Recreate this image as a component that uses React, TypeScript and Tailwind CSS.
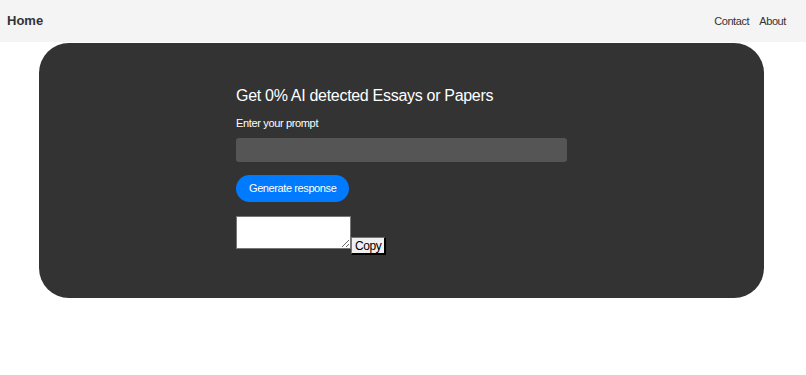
export default function App() {
  return (
    <div className="min-h-screen bg-white font-['Liberation_Sans',Arial,sans-serif] text-[#333]">
      {/* nav */}
      <nav className="h-[42px] bg-[#f4f4f4] flex items-center justify-between pl-[7px] pr-[20px]">
        <span className="text-[13px] font-bold text-[#333]">Home</span>
        <div className="flex items-center gap-[10px] text-[11px] tracking-[-0.4px] text-[#333]">
          <a>Contact</a>
          <a>About</a>
        </div>
      </nav>

      {/* main card */}
      <div className="w-[725px] ml-[39px] mt-[1px] bg-[#333333] rounded-[30px] h-[255px] pt-[43px]">
        <div className="w-[331px] mx-auto">
          <h2 className="text-[16px] tracking-[-0.3px] leading-[20px] text-white">
            Get 0% AI detected Essays or Papers
          </h2>
          <label className="block mt-[11px] text-[11px] tracking-[-0.35px] leading-[13px] text-white">
            Enter your prompt
          </label>
          <input
            type="text"
            className="block mt-[8px] w-full h-[24px] bg-[#555555] rounded-[3px] outline-none"
          />
          <button className="mt-[13px] h-[27px] px-[13px] rounded-full bg-[#007bff] text-white text-[11px] tracking-[-0.4px]">
            Generate response
          </button>
          <div className="mt-[14px] flex items-end">
            <textarea className="w-[115px] h-[33px] bg-white border border-[#767676] resize-y outline-none" />
            <button className="h-[18px] px-[3px] bg-[#efefef] border border-[#767676] border-r-2 border-b-2 border-r-black border-b-black text-[12px] tracking-[-0.4px] text-black leading-none mb-[-6px]">
              Copy
            </button>
          </div>
        </div>
      </div>
    </div>
  );
}
